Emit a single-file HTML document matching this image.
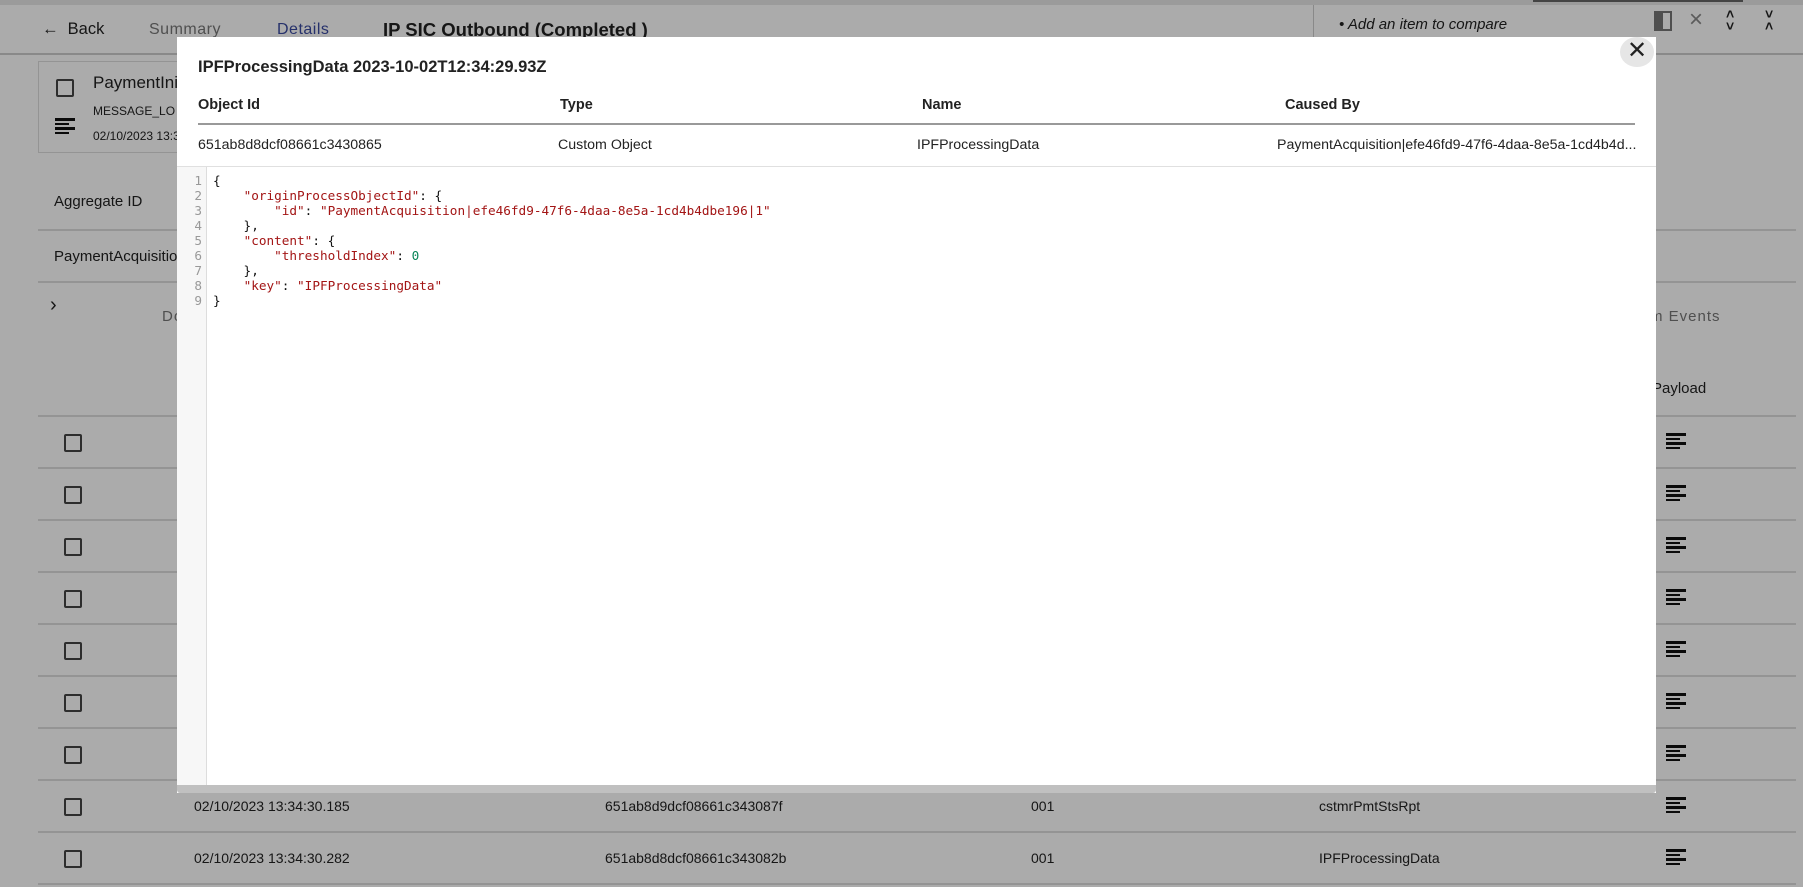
<!DOCTYPE html>
<html><head><meta charset="utf-8"><style>
*{margin:0;padding:0;box-sizing:border-box}
body{width:1803px;height:887px;overflow:hidden;position:relative;background:#fff;font-family:"Liberation Sans",sans-serif;color:#222}
.a{position:absolute;white-space:nowrap}
.hl{position:absolute;height:2px;background:#ddd}
.cb{position:absolute;width:18px;height:18px;border:2px solid #444;border-radius:2px}
.li{position:absolute;width:20px;height:18px}
.li i{display:block;height:2.5px;background:#111;margin-bottom:2px}
#ov{position:absolute;left:0;top:0;width:1803px;height:887px;background:rgba(0,0,0,0.33)}
#m{position:absolute;left:177px;top:37px;width:1479px;height:756px;background:#fff}
.mono{font-family:"DejaVu Sans Mono",monospace;font-size:12.7px;line-height:15px}
.s{color:#a31515}.n{color:#098658}
</style></head><body>
<div class="a" style="left:0;top:0;width:1803px;height:5px;background:#e8e8e8"></div>
<div class="a" style="left:1533px;top:0;width:210px;height:2px;background:#666"></div>
<div class="hl" style="left:0;top:53px;width:1803px;background:#ccc"></div>
<div class="a" style="left:42px;top:20px;font-size:16.5px">&#8592;&nbsp; Back</div>
<div class="a" style="left:149px;top:21px;font-size:16px;color:#777;letter-spacing:.5px">Summary</div>
<div class="a" style="left:277px;top:21px;font-size:16px;color:#3a4aa0;letter-spacing:.5px">Details</div>
<div class="a" style="left:383px;top:19px;font-size:18.5px;font-weight:bold">IP SIC Outbound (Completed )</div>
<div class="a" style="left:1313px;top:5px;width:1px;height:48px;background:#ccc"></div>
<div class="a" style="left:1339px;top:16px;font-size:15px;font-style:italic">• Add an item to compare</div>
<div class="a" style="left:1654px;top:11px;width:18px;height:20px;border:2px solid #777;background:linear-gradient(90deg,#777 50%,transparent 50%)"></div>
<div class="a" style="left:1689px;top:6px;font-size:24px;color:#888">×</div>
<div class="a" style="left:1726px;top:8px;font-size:14px;line-height:12px;font-weight:bold;text-align:center">˄<br>˅</div>
<div class="a" style="left:1765px;top:8px;font-size:14px;line-height:12px;font-weight:bold;text-align:center">˅<br>˄</div>

<div class="a" style="left:38px;top:61px;width:140px;height:92px;border:1px solid #ddd"></div>
<div class="cb" style="left:56px;top:79px"></div>
<div class="li" style="left:55px;top:118px"><i></i><i style="width:70%"></i><i></i><i style="width:70%"></i></div>
<div class="a" style="left:93px;top:73px;font-size:17px">PaymentInit</div>
<div class="a" style="left:93px;top:104px;font-size:12px">MESSAGE_LO</div>
<div class="a" style="left:93px;top:129px;font-size:12px">02/10/2023 13:3</div>
<div class="a" style="left:54px;top:193px;font-size:15px">Aggregate ID</div>
<div class="hl" style="left:38px;top:229px;width:1758px"></div>
<div class="a" style="left:54px;top:248px;font-size:15px">PaymentAcquisition</div>
<div class="hl" style="left:38px;top:281px;width:1758px"></div>
<div class="a" style="left:50px;top:294px;font-size:20px">›</div>
<div class="a" style="left:162px;top:308px;font-size:15px;color:#777;letter-spacing:1px">Do</div>
<div class="a" style="left:1650px;top:308px;font-size:15px;color:#777;letter-spacing:1px">m Events</div>
<div class="a" style="left:1652px;top:380px;font-size:15px">Payload</div>
<div class="hl" style="left:38px;top:415px;width:1758px"></div>
<div id="rows"></div>
<script>
var h='';for(var i=0;i<9;i++){var y=416+52*i;h+='<div class="cb" style="left:64px;top:'+(y+18)+'px"></div><div class="li" style="left:1666px;top:'+(y+17)+'px"><i></i><i style="width:70%"></i><i></i><i style="width:70%"></i></div><div class="hl" style="left:38px;top:'+(y+51)+'px;width:1758px"></div>';}
h+='<div class="a" style="left:194px;top:798px;font-size:14px">02/10/2023 13:34:30.185</div><div class="a" style="left:605px;top:798px;font-size:14px">651ab8d9dcf08661c343087f</div><div class="a" style="left:1031px;top:798px;font-size:14px">001</div><div class="a" style="left:1319px;top:798px;font-size:14px">cstmrPmtStsRpt</div>';
h+='<div class="a" style="left:194px;top:850px;font-size:14px">02/10/2023 13:34:30.282</div><div class="a" style="left:605px;top:850px;font-size:14px">651ab8d8dcf08661c343082b</div><div class="a" style="left:1031px;top:850px;font-size:14px">001</div><div class="a" style="left:1319px;top:850px;font-size:14px">IPFProcessingData</div>';
document.getElementById('rows').outerHTML=h;
</script>
<div id="ov"></div>
<div id="m">
<div class="a" style="left:21px;top:21px;font-size:16.5px;font-weight:bold">IPFProcessingData 2023-10-02T12:34:29.93Z</div>
<div class="a" style="left:1443px;top:0px;width:34px;height:30px;border-radius:50%;background:#e6e6e6;font-size:24px;text-align:center;line-height:28px">✕</div>
<div class="a" style="left:21px;top:60px;font-size:14.5px;font-weight:bold">Object Id</div>
<div class="a" style="left:383px;top:60px;font-size:14.5px;font-weight:bold">Type</div>
<div class="a" style="left:745px;top:60px;font-size:14.5px;font-weight:bold">Name</div>
<div class="a" style="left:1108px;top:60px;font-size:14.5px;font-weight:bold">Caused By</div>
<div class="a" style="left:21px;top:86px;width:1437px;height:2px;background:#999"></div>
<div class="a" style="left:21px;top:100px;font-size:14.2px">651ab8d8dcf08661c3430865</div>
<div class="a" style="left:381px;top:100px;font-size:14.2px">Custom Object</div>
<div class="a" style="left:740px;top:100px;font-size:14.2px">IPFProcessingData</div>
<div class="a" style="left:1100px;top:100px;font-size:14.2px">PaymentAcquisition|efe46fd9-47f6-4daa-8e5a-1cd4b4d...</div>
<div class="a" style="left:0;top:129px;width:1479px;height:1px;background:#e0e0e0"></div>
<div class="a" style="left:0;top:130px;width:30px;height:618px;background:#f7f7f7;border-right:1px solid #ddd"></div>
<div class="a mono" style="left:0;top:136px;width:25px;text-align:right;color:#999">1<br>2<br>3<br>4<br>5<br>6<br>7<br>8<br>9</div>
<pre class="a mono" style="left:36px;top:136px;color:#111;white-space:pre">{
    <span class="s">"originProcessObjectId"</span>: {
        <span class="s">"id"</span>: <span class="s">"PaymentAcquisition|efe46fd9-47f6-4daa-8e5a-1cd4b4dbe196|1"</span>
    },
    <span class="s">"content"</span>: {
        <span class="s">"thresholdIndex"</span>: <span class="n">0</span>
    },
    <span class="s">"key"</span>: <span class="s">"IPFProcessingData"</span>
}</pre>
<div class="a" style="left:0;top:748px;width:1479px;height:8px;background:#c0c0c0;border-radius:0 0 3px 3px"></div>
</div>
</body></html>
